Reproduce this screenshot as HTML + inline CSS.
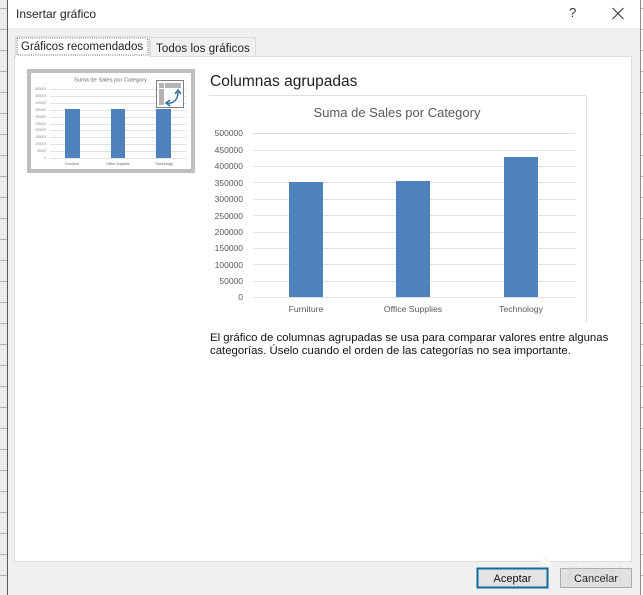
<!DOCTYPE html>
<html><head><meta charset="utf-8"><style>
html,body{margin:0;padding:0;width:643px;height:595px;overflow:hidden;background:#fff}
svg{display:block}
text{font-family:"Liberation Sans",sans-serif}
</style></head><body>
<svg width="643" height="595" viewBox="0 0 643 595" xmlns="http://www.w3.org/2000/svg">
<!-- background sheet -->
<rect x="0" y="0" width="7" height="595" fill="#ececec"/>
<g stroke="#b4b4b4" stroke-width="1">
<path d="M0 8.5H7M0 29.5H7M0 50.5H7M0 71.5H7M0 92.5H7M0 113.5H7M0 134.5H7M0 155.5H7M0 176.5H7M0 197.5H7M0 218.5H7M0 239.5H7M0 260.5H7M0 281.5H7M0 302.5H7M0 323.5H7M0 344.5H7M0 365.5H7M0 386.5H7M0 407.5H7M0 428.5H7M0 449.5H7M0 470.5H7M0 491.5H7M0 512.5H7M0 533.5H7M0 554.5H7M0 575.5H7"/>
<path d="M641 8.5H643M641 29.5H643M641 50.5H643M641 71.5H643M641 92.5H643M641 113.5H643M641 134.5H643M641 155.5H643M641 176.5H643M641 197.5H643M641 218.5H643M641 239.5H643M641 260.5H643M641 281.5H643M641 302.5H643M641 323.5H643M641 344.5H643M641 365.5H643M641 386.5H643M641 407.5H643M641 428.5H643M641 449.5H643M641 470.5H643M641 491.5H643M641 512.5H643M641 533.5H643M641 554.5H643M641 575.5H643"/>
</g>
<rect x="7" y="0" width="1" height="595" fill="#5a5a5a"/>
<rect x="640" y="0" width="1" height="595" fill="#8a8a8a"/>
<!-- dialog -->
<rect x="8" y="0" width="632" height="595" fill="#f0f0f0"/>
<rect x="8" y="0" width="632" height="28" fill="#ffffff"/>
<text x="16" y="18" font-size="12" fill="#222">Insertar gráfico</text>
<text x="569" y="17" font-size="13" fill="#333">?</text>
<path d="M612.5 8L623.5 19M623.5 8L612.5 19" stroke="#333" stroke-width="1" fill="none"/>
<!-- panel -->
<rect x="14.5" y="56.5" width="617" height="505" fill="#fff" stroke="#dcdcdc"/>
<!-- tabs -->
<rect x="150.5" y="37.5" width="105" height="19" fill="#f0f0f0" stroke="#dcdcdc"/>
<text x="156" y="52" font-size="11.5" fill="#222" letter-spacing=".1">Todos los gráficos</text>
<rect x="15" y="36" width="135" height="21" fill="#fff"/>
<path d="M15.5 57V36.5H149.5V57" fill="none" stroke="#dcdcdc"/>
<rect x="17" y="38" width="131" height="17" fill="none" stroke="#333" stroke-width=".8" stroke-dasharray="1 1.2"/>
<text x="21" y="50" font-size="11.5" fill="#222">Gráficos recomendados</text>
<!-- thumbnail -->
<rect x="29" y="71" width="164" height="100" fill="#fff" stroke="#bfbfbf" stroke-width="4"/>
<text x="110.5" y="81.5" font-size="5.7" fill="#666" text-anchor="middle">Suma de Sales por Category</text>
<g stroke="#e2e2e2" stroke-width="1">
<path d="M50 89.5H186M50 96.5H186M50 103.5H186M50 110.5H186M50 117.5H186M50 124.5H186M50 130.5H186M50 137.5H186M50 144.5H186M50 151.5H186M50 158.5H186"/>
</g>
<g font-size="3.2" fill="#888" text-anchor="end">
<text x="46" y="90">500000</text><text x="46" y="97">450000</text><text x="46" y="104">400000</text><text x="46" y="111">350000</text><text x="46" y="118">300000</text><text x="46" y="125">250000</text><text x="46" y="131">200000</text><text x="46" y="138">150000</text><text x="46" y="145">100000</text><text x="46" y="152">50000</text><text x="46" y="159">0</text>
</g>
<g fill="#4f81bd">
<rect x="65" y="109" width="15" height="49"/>
<rect x="111" y="109" width="14" height="49"/>
<rect x="156" y="109" width="15" height="49"/>
</g>
<g font-size="3.6" fill="#666" text-anchor="middle">
<text x="72" y="165">Furniture</text><text x="118" y="165">Office Supplies</text><text x="164" y="165">Technology</text>
</g>
<rect x="156.5" y="80.5" width="27" height="27" fill="#fff" stroke="#7f7f7f"/>
<rect x="159" y="83" width="5" height="5" fill="#b3b3b3"/>
<rect x="165" y="83" width="16" height="5" fill="#b3b3b3"/>
<rect x="159" y="89" width="5" height="16" fill="#b3b3b3"/>
<path d="M167 103C173 104 178 100 178 92" fill="none" stroke="#2f6f9f" stroke-width="1.5"/>
<path d="M175 94L178 90L181 94" fill="none" stroke="#2f6f9f" stroke-width="1.5"/>
<path d="M170 100L166 103L170 106" fill="none" stroke="#2f6f9f" stroke-width="1.5"/>
<!-- heading -->
<text x="210" y="86" font-size="15.5" fill="#222">Columnas agrupadas</text>
<!-- chart -->
<path d="M209 95.5H586.5V322" fill="none" stroke="#dedede"/>
<text x="397" y="117" font-size="13" fill="#595959" text-anchor="middle">Suma de Sales por Category</text>
<g stroke="#e0e0e0" stroke-width="1">
<path d="M253 133.5H575M253 150.5H575M253 166.5H575M253 182.5H575M253 199.5H575M253 215.5H575M253 232.5H575M253 248.5H575M253 264.5H575M253 281.5H575M253 297.5H575"/>
</g>
<g font-size="8.5" fill="#595959" text-anchor="end">
<text x="243" y="136">500000</text><text x="243" y="153">450000</text><text x="243" y="169">400000</text><text x="243" y="186">350000</text><text x="243" y="202">300000</text><text x="243" y="219">250000</text><text x="243" y="235">200000</text><text x="243" y="251">150000</text><text x="243" y="268">100000</text><text x="243" y="284">50000</text><text x="243" y="300">0</text>
</g>
<g fill="#4f81bd">
<rect x="289" y="182" width="34" height="115"/>
<rect x="396" y="181" width="34" height="116"/>
<rect x="504" y="157" width="34" height="140"/>
</g>
<g font-size="8.7" fill="#595959" text-anchor="middle">
<text x="306" y="312">Furniture</text><text x="413" y="312">Office Supplies</text><text x="521" y="312">Technology</text>
</g>
<!-- description -->
<text x="210" y="341" font-size="11.4" fill="#111">El gráfico de columnas agrupadas se usa para comparar valores entre algunas</text>
<text x="210" y="354" font-size="11.4" fill="#111">categorías. Úselo cuando el orden de las categorías no sea importante.</text>
<!-- watermark leaf, behind buttons -->
<path d="M545 557L552 563L545 567L538 563Z" fill="#f7f8f2"/>
<!-- buttons -->
<rect x="477.5" y="568.5" width="70" height="19" fill="#e3e3e3" stroke="#0f6a9c" stroke-width="2"/>
<text x="512.5" y="582" font-size="11" fill="#111" text-anchor="middle">Aceptar</text>
<rect x="560.5" y="568.5" width="71" height="19" fill="#e1e1e1" stroke="#adadad"/>
<text x="596" y="582" font-size="11" fill="#111" text-anchor="middle">Cancelar</text>
<!-- watermark text -->
<text x="566" y="582" font-size="22" fill="#cfcfcf" fill-opacity=".25" font-weight="bold">Platzi</text>
</svg>
</body></html>
